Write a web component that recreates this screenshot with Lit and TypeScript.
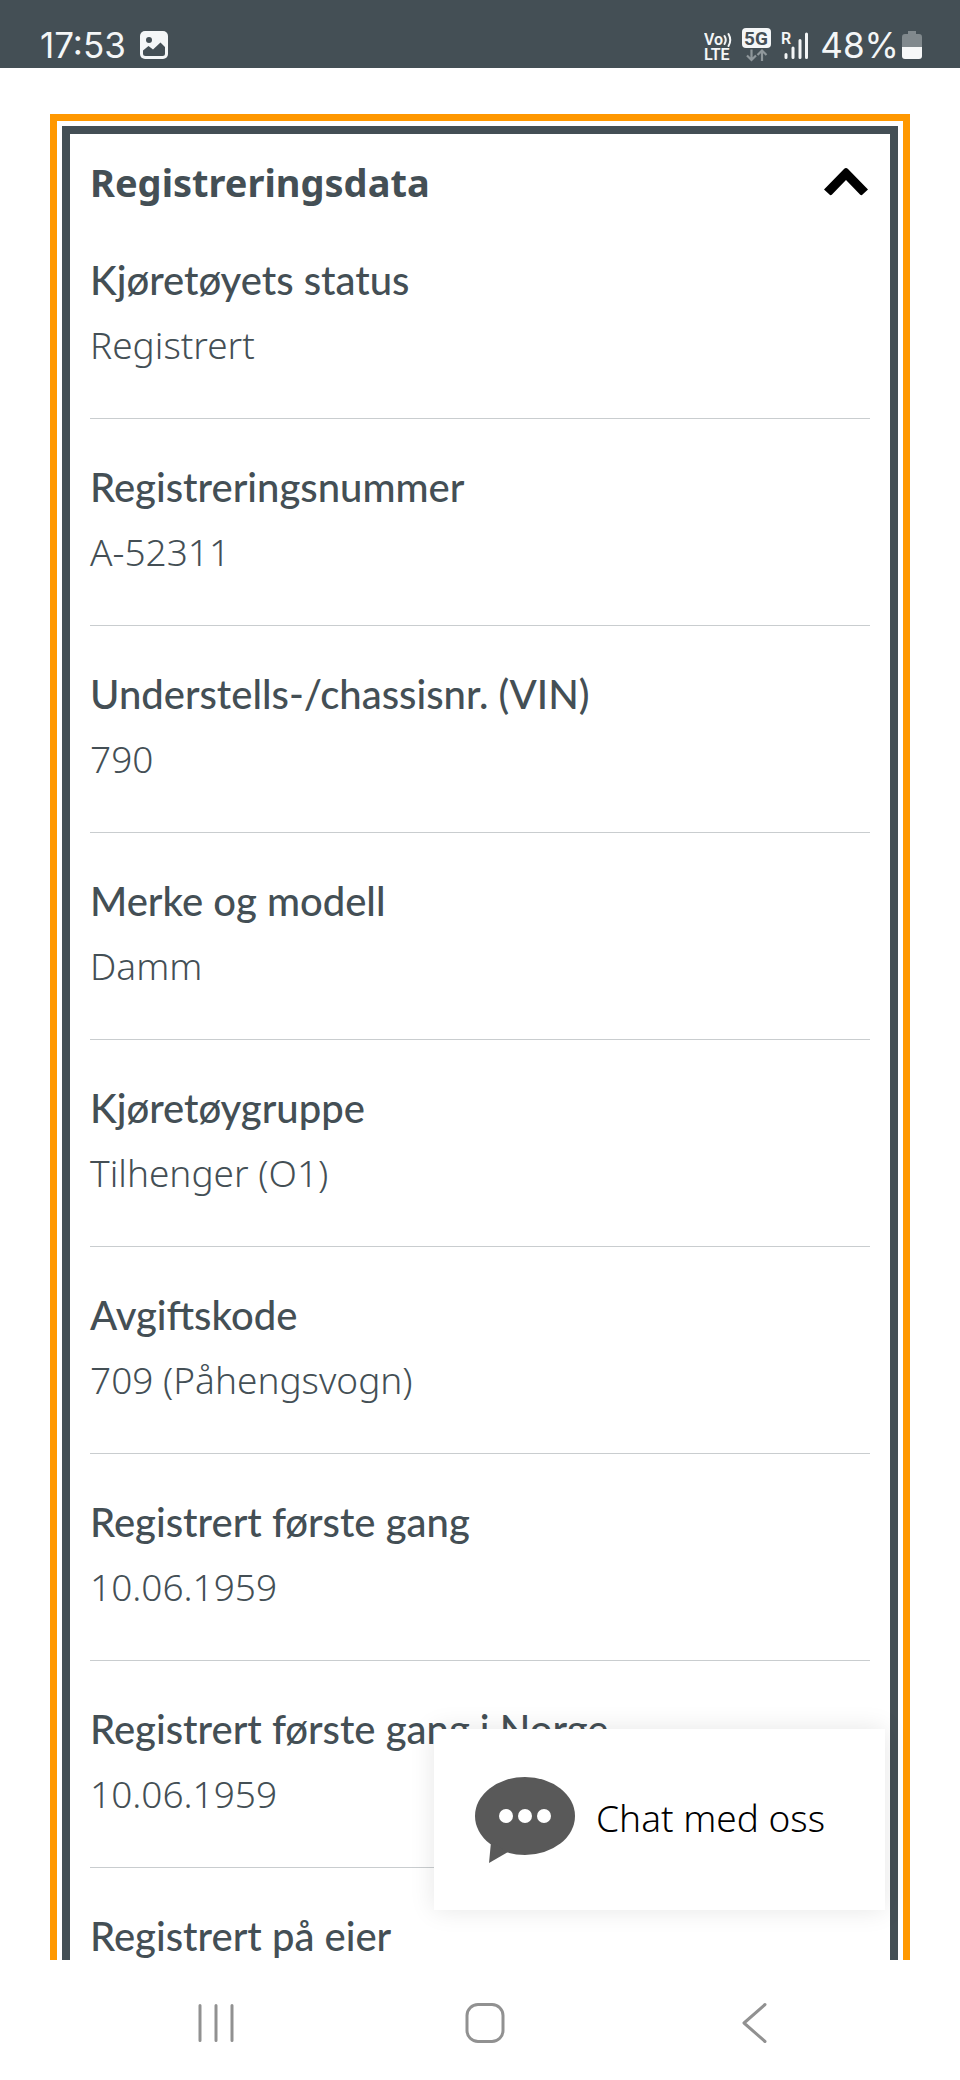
import { LitElement, html, css, nothing } from "lit";
import { customElement, state } from "lit/decorators.js";

interface Field {
  label: string;
  value?: string;
}

const FIELDS: Field[] = [
  { label: "Kjøretøyets status", value: "Registrert" },
  { label: "Registreringsnummer", value: "A-52311" },
  { label: "Understells-/chassisnr. (VIN)", value: "790" },
  { label: "Merke og modell", value: "Damm" },
  { label: "Kjøretøygruppe", value: "Tilhenger (O1)" },
  { label: "Avgiftskode", value: "709 (Påhengsvogn)" },
  { label: "Registrert første gang", value: "10.06.1959" },
  { label: "Registrert første gang i Norge", value: "10.06.1959" },
  { label: "Registrert på eier" },
];

@customElement("status-bar")
class StatusBar extends LitElement {
  static styles = css`
    :host {
      display: flex;
      align-items: flex-end;
      justify-content: space-between;
      box-sizing: border-box;
      height: 68px;
      padding: 0 38px 0 40px;
      background: #444f55;
      color: #f4f6f7;
      font-family: Inter, Roboto, sans-serif;
      font-size: 35px;
      line-height: 46px;
    }
    .group {
      display: flex;
      align-items: center;
    }
    .left {
      gap: 14px;
    }
    .signals {
      gap: 10px;
      margin-right: 11px;
    }
    .battery {
      margin-left: 3px;
    }
    svg {
      display: block;
      flex: none;
    }
    .tiny {
      font: 600 16px Roboto, sans-serif;
      fill: #f4f6f7;
    }
    .net {
      font: 700 19px Roboto, sans-serif;
      fill: #444f55;
    }
  `;

  render() {
    return html`
      <div class="group left">
        <span>17:53</span>
        <svg width="28" height="28" viewBox="0 0 28 28" aria-hidden="true">
          <rect width="28" height="28" rx="5" fill="#f4f6f7" />
          <circle cx="9" cy="9" r="3" fill="#444f55" />
          <path d="M3 19.500L8.500 15L13 18.500L20.500 11.500L25 16V22.500Q25 25 22.500 25H5.500Q3 25 3 22.500Z" fill="#444f55" />
        </svg>
      </div>
      <div class="group">
        <div class="group signals">
          <svg width="28" height="42" viewBox="0 -4 28 42" role="img" aria-label="VoLTE">
            <text class="tiny" x="0" y="17">Vo</text>
            <path d="M20.500 8Q23 12 20.500 16M24.500 6Q28 12 24.500 18" fill="none" stroke="#f4f6f7" stroke-width="2" stroke-linecap="round" />
            <text class="tiny" x="0" y="32">LTE</text>
          </svg>
          <svg width="29" height="42" viewBox="0 -4 29 42" role="img" aria-label="5G">
            <rect width="29" height="20" rx="4" fill="#f4f6f7" />
            <text class="net" x="14" y="17" text-anchor="middle">5G</text>
            <path d="M9.500 21.500V32M5 27.500L9.500 32L14 27.500M20 33V22.500M15.500 27L20 22.500L24.500 27" fill="none" stroke="#8f979b" stroke-width="2.200" />
          </svg>
          <svg width="28" height="42" viewBox="0 -4 28 42" role="img" aria-label="Signal">
            <text class="tiny" x="0" y="16">R</text>
            <path d="M5 26.500V29.500M12 20V29.500M19 12.500V29.500M25.500 6V29.500" stroke="#f4f6f7" stroke-width="3" stroke-linecap="round" />
          </svg>
        </div>
        <span>48%</span>
        <svg class="battery" width="20" height="28" viewBox="0 0 20 28" aria-hidden="true">
          <path d="M6 0H14V3H17Q20 3 20 6V16H0V6Q0 3 3 3H6Z" fill="#81898d" />
          <path d="M0 16H20V25Q20 28 17 28H3Q0 28 0 25Z" fill="#f7f8f8" />
        </svg>
      </div>
    `;
  }
}

@customElement("registration-panel")
class RegistrationPanel extends LitElement {
  @state() private open = true;

  static styles = css`
    :host {
      display: block;
      border: 7px solid #ff9800;
      padding: 5px;
      color: #444f55;
    }
    .panel {
      border: 8px solid #444f55;
      padding: 16px 20px;
    }
    .title {
      margin: 0;
      font-size: 38px;
    }
    .toggle {
      display: flex;
      align-items: center;
      justify-content: space-between;
      width: 100%;
      padding: 0 2px 0 0;
      border: 0;
      background: none;
      color: inherit;
      font: inherit;
      font-weight: 700;
      line-height: 64px;
      text-align: left;
      cursor: pointer;
    }
    .chevron {
      display: block;
    }
    .closed {
      transform: rotate(180deg);
    }
    .fields {
      margin: 0;
      line-height: 48px;
    }
    .field {
      display: grid;
      gap: 17px;
      padding: 44px 0 49px;
      border-bottom: 1px solid #c9cdcf;
    }
    .field:first-child {
      padding-top: 42px;
    }
    .field:last-child {
      border-bottom: 0;
    }
    .label {
      font-family: Lato, sans-serif;
      font-size: 40px;
      font-weight: 500;
    }
    .value {
      margin: 0;
      font-size: 37px;
      font-weight: 300;
    }
  `;

  render() {
    return html`
      <section class="panel">
        <h2 class="title">
          <button class="toggle" aria-expanded=${this.open} @click=${() => (this.open = !this.open)}>
            Registreringsdata
            <svg class="chevron ${this.open ? "" : "closed"}" width="44" height="28" viewBox="0 0 44 28" aria-hidden="true">
              <path d="M0 21.500L20 1Q22 -1 24 1L44 21.500L38 27Q37 27.500 36 26.500L22 12L8 26.500Q7 27.500 6 27Z" fill="#000" />
            </svg>
          </button>
        </h2>
        ${this.open
          ? html`<dl class="fields">
              ${FIELDS.map(
                (f) => html`<div class="field">
                  <dt class="label">${f.label}</dt>
                  ${f.value ? html`<dd class="value">${f.value}</dd>` : nothing}
                </div>`
              )}
            </dl>`
          : nothing}
      </section>
    `;
  }
}

@customElement("nav-bar")
class NavBar extends LitElement {
  static styles = css`
    :host {
      display: grid;
      grid-template-columns: repeat(3, 1fr);
      flex: none;
      height: 120px;
      padding: 5px 72px 0 82px;
      box-sizing: border-box;
      background: #fff;
    }
    .key {
      display: grid;
      place-items: center;
      border: 0;
      padding: 0;
      background: none;
    }
    .glyph {
      fill: none;
      stroke: #919191;
      stroke-width: 3;
      stroke-linecap: round;
      stroke-linejoin: round;
    }
  `;

  render() {
    return html`
      <button class="key" aria-label="Nylige apper">
        <svg class="glyph" width="40" height="42" viewBox="0 0 40 42">
          <path d="M4 3.500V38.500M20 3.500V38.500M36 3.500V38.500" />
        </svg>
      </button>
      <button class="key" aria-label="Hjem">
        <svg class="glyph" width="40" height="42" viewBox="0 0 40 42">
          <rect x="2" y="2.500" width="36" height="37" rx="11" />
        </svg>
      </button>
      <button class="key" aria-label="Tilbake">
        <svg class="glyph" width="40" height="42" viewBox="0 0 40 42">
          <path d="M31 2.500L10 21L31 39.500" />
        </svg>
      </button>
    `;
  }
}

@customElement("app-root")
class AppRoot extends LitElement {
  static styles = css`
    :host {
      display: flex;
      flex-direction: column;
      height: 100vh;
      background: #fff;
      font-family: "Noto Sans", "Open Sans", sans-serif;
    }
    .view {
      position: relative;
      flex: 1;
      min-height: 0;
    }
    .scroller {
      box-sizing: border-box;
      height: 100%;
      padding: 46px 50px;
      overflow-y: auto;
      scrollbar-width: none;
    }
    .chat {
      position: absolute;
      right: 75px;
      bottom: 50px;
      display: flex;
      align-items: center;
      gap: 20px;
      padding: 42px 60px 46px 40px;
      border: 0;
      background: #fff;
      box-shadow: 0 0 24px rgba(0, 0, 0, 0.1);
      color: #000;
      font: inherit;
      font-size: 37px;
      font-weight: 300;
      line-height: 93px;
      white-space: nowrap;
      cursor: pointer;
    }
  `;

  render() {
    return html`
      <status-bar></status-bar>
      <main class="view">
        <div class="scroller"><registration-panel></registration-panel></div>
        <button class="chat">
          <svg width="102" height="93" viewBox="0 -5 102 93" aria-hidden="true">
            <ellipse cx="51" cy="40" rx="50" ry="39" fill="#595959" />
            <path d="M17 66L15 87L34 76Z" fill="#595959" />
            <circle cx="32" cy="40" r="7" fill="#fff" />
            <circle cx="51" cy="40" r="7" fill="#fff" />
            <circle cx="70" cy="40" r="7" fill="#fff" />
          </svg>
          Chat med oss
        </button>
      </main>
      <nav-bar></nav-bar>
    `;
  }
}
